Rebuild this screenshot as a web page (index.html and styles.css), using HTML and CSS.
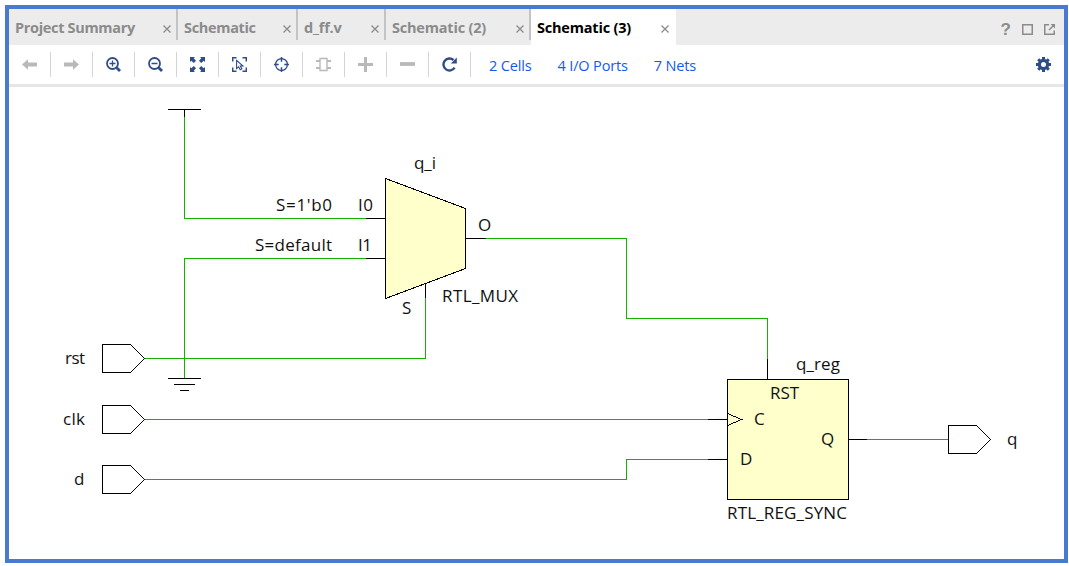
FILE: index.html
```html
<!DOCTYPE html>
<html lang="en">
<head>
<meta charset="utf-8">
<title>Schematic (3)</title>
<link rel="stylesheet" href="styles.css">
</head>
<body>
<main class="window">
  <header class="tabbar">
    <nav class="tabs">
      <div class="tab tab-summary"><span class="label">Project Summary</span><svg class="close" viewBox="0 0 8 8"><path d="M.5.5l7 7M7.5.5l-7 7"/></svg></div>
      <div class="tab tab-schematic"><span class="label">Schematic</span><svg class="close" viewBox="0 0 8 8"><path d="M.5.5l7 7M7.5.5l-7 7"/></svg></div>
      <div class="tab tab-source"><span class="label">d_ff.v</span><svg class="close" viewBox="0 0 8 8"><path d="M.5.5l7 7M7.5.5l-7 7"/></svg></div>
      <div class="tab tab-schematic2"><span class="label">Schematic (2)</span><svg class="close" viewBox="0 0 8 8"><path d="M.5.5l7 7M7.5.5l-7 7"/></svg></div>
      <div class="tab tab-active"><span class="label">Schematic (3)</span><svg class="close" viewBox="0 0 8 8"><path d="M.5.5l7 7M7.5.5l-7 7"/></svg></div>
    </nav>
    <div class="controls">
      <span class="help">?</span>
      <svg class="control" viewBox="0 0 11 11"><rect x=".75" y=".75" width="9.5" height="9.5"/></svg>
      <svg class="control" viewBox="0 0 11 11"><path d="M5 .75H.75v9.5h9.5V6.5M5 6l4-4"/><path class="tip" d="M6.5 0H11v4.5z"/></svg>
    </div>
  </header>

  <div class="toolbar">
    <div class="tool off"><svg viewBox="0 0 15 15"><path class="solid" d="M0 7.500l6-5.300v3.300h9v4H6v3.300z"/></svg></div>
    <div class="tool off"><svg viewBox="0 0 15 15"><path class="solid" d="M15 7.500l-6-5.300v3.300H0v4h9v3.300z"/></svg></div>
    <div class="tool"><svg viewBox="0 0 15 15"><circle cx="6.5" cy="6.5" r="5.5" stroke-width="1.8"/><path d="M10.7 10.7l3.3 3.3" stroke-width="2.8"/><path d="M3.500 6.500h6M6.500 3.500v6" stroke-width="1.3"/></svg></div>
    <div class="tool"><svg viewBox="0 0 15 15"><circle cx="6.5" cy="6.5" r="5.5" stroke-width="1.8"/><path d="M10.7 10.7l3.3 3.3" stroke-width="2.8"/><path d="M3.500 6.500h6" stroke-width="1.5"/></svg></div>
    <div class="tool"><svg viewBox="0 0 15 15"><path class="solid" d="M0 0h5L3.700 1.300 6 3.800 3.800 6 1.300 3.700 0 5zM15 0v5l-1.300-1.300L11.200 6 9 3.800l2.300-2.500L10 0zM0 15v-5l1.300 1.300L3.800 9 6 11.200l-2.300 2.500L5 15zM15 15h-5l1.300-1.300L9 11.200 11.200 9l2.500 2.300L15 10z"/></svg></div>
    <div class="tool"><svg viewBox="0 0 15 15"><path d="M.7 4.500V.7H4.500M10.500.7h3.800V4.500M.7 10.500v3.800H4.500M10.500 14.300h3.800V10.500" stroke-width="1.500"/><path d="M4.600 3.400v8.200l2-1.800 1.600 3 1.700-.9-1.600-2.900h2.700z" stroke-width="1.100"/></svg></div>
    <div class="tool"><svg viewBox="0 0 15 15"><circle cx="7.5" cy="7.5" r="5.900" stroke-width="1.300"/><path d="M7.500 0v4.700M7.500 10.300V15M0 7.500h4.700M10.300 7.500H15" stroke-width="1.500"/></svg></div>
    <div class="tool off"><svg viewBox="0 0 15 15"><path d="M4 1.500h7v12H4z" stroke-width="1.400"/><path d="M0 4h4M0 11h4M11 4h4M11 11h4" stroke-width="1.800"/></svg></div>
    <div class="tool off"><svg viewBox="0 0 15 15"><path d="M0 7.500h15M7.500 0v15" stroke-width="3"/></svg></div>
    <div class="tool off"><svg viewBox="0 0 15 15"><path d="M0 7h15" stroke-width="3.800"/></svg></div>
    <div class="tool"><svg viewBox="0 0 15 15"><path d="M12.600 10.600A6 6 0 1 1 11.500 3" stroke-width="2.400"/><path class="solid" d="M14.800.5v6H8.800z"/></svg></div>
    <div class="stats">
      <a class="cells">2 Cells</a><a class="ports">4 I/O Ports</a><a class="nets">7 Nets</a>
    </div>
    <svg class="gear" viewBox="0 0 15 15"><circle cx="7.5" cy="7.5" r="4.1" stroke-width="3.2"/><path d="M7.500 0v3M7.500 12v3M0 7.500h3M12 7.500h3M2.200 2.200l2 2M10.800 10.800l2 2M12.800 2.200l-2 2M4.200 10.800l-2 2" stroke-width="3"/></svg>
  </div>

  <svg class="schematic" viewBox="9 87 1055 472">
    <g class="net">
      <path d="M184.500 116V218.500H366"/>
      <path d="M366 258.500H184.500V379"/>
      <path d="M144 358.500H425.500V298"/>
      <path d="M486 238.500H626.500V318.500H767.500V359"/>
      <path d="M144 479.500H626.500V459.500H708"/>
      <path d="M144 419.500H708"/>
      <path d="M867 439.500H948"/>
    </g>
    <g class="part">
      <path d="M385.500 178.500L465.500 208.500V268.500L385.500 298.500z"/>
      <path d="M727.500 379.500h121v120h-121z"/>
    </g>
    <g class="wire">
      <path d="M168 109.500H201M184.500 109V117"/>
      <path d="M168 378.500H201M174 384.500H195M180 390.500H189"/>
      <path d="M366 218.500H385M366 258.500H385M466 238.500H486M425.500 283V298"/>
      <path d="M767.500 359V379M708 419.500H727M708 459.500H727M849 439.500H867"/>
      <path d="M727.500 413.500L741.500 419.500L727.500 425.500"/>
      <path d="M102.500 344.500h28l14 14l-14 14h-28z"/>
      <path d="M102.500 405.500h28l14 14l-14 14h-28z"/>
      <path d="M102.500 465.500h28l14 14l-14 14h-28z"/>
      <path d="M948.500 425.500h28l14 14l-14 14h-28z"/>
    </g>
    <g class="names">
      <text x="414" y="169" textLength="22">q_i</text>
      <text x="276" y="211" textLength="56">S=1'b0</text>
      <text x="358" y="211" textLength="15">I0</text>
      <text x="255" y="251" textLength="77">S=default</text>
      <text x="358" y="251" textLength="14">I1</text>
      <text x="478" y="231" textLength="14">O</text>
      <text x="402" y="314">S</text>
      <text x="442" y="302" textLength="76">RTL_MUX</text>
      <text x="65" y="364" textLength="20">rst</text>
      <text x="63" y="425" textLength="22">clk</text>
      <text x="74" y="485">d</text>
      <text x="796" y="370" textLength="44">q_reg</text>
      <text x="770" y="399" textLength="29">RST</text>
      <text x="754" y="425">C</text>
      <text x="740" y="465">D</text>
      <text x="821" y="445">Q</text>
      <text x="727" y="519" textLength="120">RTL_REG_SYNC</text>
      <text x="1007" y="445">q</text>
    </g>
  </svg>
</main>
</body>
</html>
```
FILE: styles.css
```css
* { box-sizing: border-box; }

body {
  margin: 0;
  padding: 5px 1px 3px 5px;
  height: 566px;
  background: #fff;
  font-family: "Open Sans", "Noto Sans", sans-serif;
}

.window {
  display: flex;
  flex-direction: column;
  width: 1063px;
  height: 558px;
  border: 4px solid #487bd0;
  background: #fff;
}

.tabbar {
  display: flex;
  justify-content: space-between;
  height: 36px;
  background: #ececec;
}

.tabs { display: flex; }

.tab {
  display: flex;
  align-items: center;
  justify-content: space-between;
  height: 31px;
  padding: 6px 5px 0 6px;
  border-right: 2px solid #c3c3c3;
  color: #8b8b8b;
  font-size: 14.5px;
  font-weight: 700;
  letter-spacing: -0.2px;
  line-height: 24px;
  white-space: nowrap;
}

.tab-summary { width: 169px; letter-spacing: -0.33px; }
.tab-schematic { width: 120px; letter-spacing: -0.33px; }
.tab-source { width: 88px; }
.tab-schematic2 { width: 145px; }

.tab-active {
  width: 145px;
  height: 36px;
  padding-right: 7px;
  padding-bottom: 5px;
  border-right: 0;
  background: #fff;
  color: #000;
}

.close {
  width: 8px;
  height: 8px;
  margin-top: 2px;
  fill: none;
  stroke: #8b8b8b;
  stroke-width: 1.3;
}

.controls {
  display: flex;
  align-items: center;
  gap: 11px;
  padding: 5px 9px 0 0;
}

.help {
  color: #8b8b8b;
  font: 700 17px/20px "Liberation Sans", sans-serif;
}

.control {
  width: 11px;
  height: 11px;
  fill: none;
  stroke: #8b8b8b;
  stroke-width: 1.5;
}

.control .tip { fill: #8b8b8b; stroke: none; }

.toolbar {
  display: flex;
  align-items: center;
  height: 42px;
  border-bottom: 3px solid #e6e6e6;
}

.tool {
  display: flex;
  align-items: center;
  justify-content: center;
  width: 42px;
  height: 25px;
  border-right: 1px solid #d4d4d4;
  color: #2f4d86;
}

.tool.off { color: #b9b9b9; }

.tool svg, .gear {
  width: 15px;
  height: 15px;
  fill: none;
  stroke: currentColor;
}

.tool .solid { fill: currentColor; stroke: none; }

.stats {
  display: flex;
  flex: 1;
  gap: 26px;
  padding: 2px 0 0 18px;
  color: #1459f5;
  font-size: 14.5px;
  letter-spacing: -0.15px;
  line-height: 20px;
  white-space: nowrap;
}

.gear { margin-right: 13px; color: #2f4d86; }

.schematic {
  width: 1055px;
  height: 472px;
  fill: none;
  stroke-width: 1;
}

.net { stroke: #18b000; shape-rendering: crispEdges; }
.wire { stroke: #000; shape-rendering: crispEdges; }
.part { fill: #ffffcc; stroke: #000; shape-rendering: crispEdges; }
.names { fill: #111; font-size: 17px; }
```
